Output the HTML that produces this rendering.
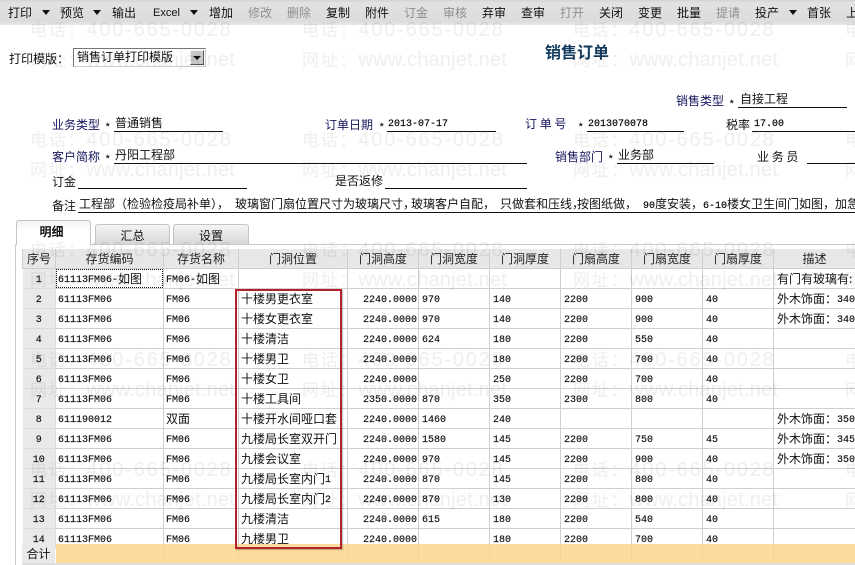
<!DOCTYPE html>
<html lang="zh"><head><meta charset="utf-8"><title>销售订单</title>
<style>
html,body{margin:0;padding:0;background:#fff}
#p{position:relative;width:855px;height:565px;overflow:hidden;background:#fff;font:12px/14px "WenQuanYi Zen Hei","Noto Sans CJK SC",sans-serif;color:#111}
#p div{position:absolute;white-space:nowrap}
#tb{left:0;top:0;width:855px;height:25px;background:linear-gradient(#d4d4d4,#e2e2e2 12%,#dcdcdc 85%,#e8e8e8)}
#tb span{position:absolute;top:6px;font-size:12px;line-height:14px;color:#111}
#tb span.d{color:#8e8e8e}
#tb span.r{width:0;height:0;top:10px;border:4.5px solid transparent;border-top:5px solid #111;border-bottom:0}
.m{font-family:"Liberation Mono",monospace;font-size:10px;color:#000;-webkit-text-stroke:.15px #000}
.l{height:1px;background:#111}
.n{color:#16165e}
.w{font:20px/24px "Liberation Sans","Noto Sans CJK SC",sans-serif;letter-spacing:1.8px;color:rgba(0,0,0,.06);-webkit-text-stroke:.3px rgba(0,0,0,.03);z-index:9}
.w.u{letter-spacing:.2px}
.w em{font-style:normal;font-size:17px;letter-spacing:1.8px}
#tbl{left:22px;top:249px;border-collapse:collapse;table-layout:fixed;width:833px;position:absolute}
#tbl td{border:1px solid #cfcfcf;height:15px;padding:4px 0 0 2px;overflow:hidden;white-space:nowrap;font:10px/15px "Liberation Mono",monospace;color:#111;text-align:left;-webkit-text-stroke:.15px #111}
#tbl th{border:1px solid #cfcfcf;height:19px;overflow:hidden;white-space:nowrap;font:12px/19px "WenQuanYi Zen Hei","Noto Sans CJK SC",sans-serif;background:#e7e7e7;text-align:center;padding:0;border-top:0;color:#222}
#tbl td:first-child{background:#e9e9e9;text-align:center;padding:4px 0 0;border-left:0;border-color:#dcdcdc}
#tbl td:nth-child(n+6){padding-left:3px}
#tbl td.q{text-align:right;padding-right:1px;padding-left:0}
#tbl b{font:12px/10px "WenQuanYi Zen Hei","Noto Sans CJK SC",sans-serif;-webkit-text-stroke:0;position:relative;top:1px}
.tab{border:1px solid #c4c4c4;border-bottom:0;border-radius:3px 3px 0 0;text-align:center;box-sizing:border-box}
</style></head><body><div id="p">
<div id="tb">
<span style="left:8px">打印</span><span class="r" style="left:42px"></span>
<span style="left:60px">预览</span><span class="r" style="left:93px"></span>
<span style="left:112px">输出</span>
<span style="left:153px;font-family:'Liberation Sans',sans-serif;font-size:11px">Excel</span><span class="r" style="left:190px"></span>
<span style="left:209px">增加</span><span class="d" style="left:248px">修改</span><span class="d" style="left:287px">删除</span>
<span style="left:326px">复制</span><span style="left:365px">附件</span><span class="d" style="left:404px">订金</span><span class="d" style="left:443px">审核</span>
<span style="left:482px">弃审</span><span style="left:521px">查审</span><span class="d" style="left:560px">打开</span><span style="left:599px">关闭</span>
<span style="left:638px">变更</span><span style="left:677px">批量</span><span class="d" style="left:716px">提请</span><span style="left:755px">投产</span>
<span class="r" style="left:789px"></span><span style="left:807px">首张</span><span style="left:846px">上</span>
</div>

<div style="left:9px;top:52px">打印模版：</div>
<div style="left:73px;top:48px;width:133px;height:19px;box-sizing:border-box;border:1px solid #777;border-right-color:#ccc;border-bottom-color:#ccc;line-height:16px;padding-left:3px">销售订单打印模版</div>
<div style="left:190px;top:50px;width:14px;height:15px;background:#c9c9c9;border:1px solid;border-color:#eee #555 #555 #eee;box-sizing:border-box"></div>
<div style="left:193px;top:56px;width:0;height:0;border:4px solid transparent;border-top:4px solid #111;border-bottom:0"></div>
<div style="left:545px;top:42px;font-size:16px;line-height:18px;font-weight:bold;color:#123a5c;font-family:'Noto Sans CJK SC',sans-serif">销售订单</div>

<div class="n" style="left:676px;top:94px">销售类型</div><div style="left:729px;top:98px">*</div><div style="left:740px;top:92px">自接工程</div><div class="l" style="left:738px;top:107px;width:109px"></div>

<div class="n" style="left:52px;top:118px">业务类型</div><div style="left:105px;top:121px">*</div><div style="left:115px;top:116px">普通销售</div><div class="l" style="left:114px;top:131px;width:109px"></div>
<div class="n" style="left:325px;top:118px">订单日期</div><div style="left:379px;top:121px">*</div><div class="m" style="left:388px;top:118px">2013-07-17</div><div class="l" style="left:387px;top:131px;width:109px"></div>
<div class="n" style="left:525px;top:117px">订&nbsp;单&nbsp;号</div><div style="left:578px;top:121px">*</div><div class="m" style="left:588px;top:118px">2013070078</div><div class="l" style="left:587px;top:131px;width:97px"></div>
<div style="left:726px;top:118px">税率</div><div class="m" style="left:754px;top:118px">17.00</div><div class="l" style="left:752px;top:131px;width:103px"></div>

<div class="n" style="left:52px;top:150px">客户简称</div><div style="left:105px;top:153px">*</div><div style="left:115px;top:148px">丹阳工程部</div><div class="l" style="left:114px;top:163px;width:413px"></div>
<div class="n" style="left:555px;top:150px">销售部门</div><div style="left:608px;top:153px">*</div><div style="left:618px;top:148px">业务部</div><div class="l" style="left:617px;top:163px;width:97px"></div>
<div style="left:757px;top:150px">业&nbsp;务&nbsp;员</div><div class="l" style="left:807px;top:163px;width:48px"></div>

<div style="left:52px;top:175px">订金</div><div class="l" style="left:78px;top:188px;width:169px"></div>
<div style="left:335px;top:174px">是否返修</div><div class="l" style="left:385px;top:188px;width:142px"></div>

<div style="left:52px;top:199px">备注</div>
<div style="left:79px;top:197px">工程部（检验检疫局补单），</div>
<div style="left:235px;top:197px">玻璃窗门扇位置尺寸为玻璃尺寸，</div>
<div style="left:411px;top:197px">玻璃客户自配，</div>
<div style="left:500px;top:197px">只做套和压线，</div>
<div style="left:577px;top:197px">按图纸做，</div>
<div style="left:643px;top:197px"><span class="m">90</span>度安装，</div>
<div style="left:703px;top:197px"><span class="m">6-10</span>楼女卫生间门如图，</div>
<div style="left:835px;top:197px">加急</div>
<div class="l" style="left:78px;top:212px;width:777px"></div>

<div style="left:15px;top:244px;width:1px;height:321px;background:#ccc"></div>
<div style="left:90px;top:244px;width:765px;height:1px;background:#ccc"></div>
<div class="tab" style="left:16px;top:220px;width:75px;height:25px;font-weight:bold;line-height:21px;padding-right:4px;font-family:'Noto Sans CJK SC',sans-serif;background:linear-gradient(#f2f2f2,#fff 40%)">明细</div>
<div class="tab" style="left:95px;top:224px;width:75px;height:20px;background:linear-gradient(#f4f4f4,#d8d8d8);line-height:22px">汇总</div>
<div class="tab" style="left:173px;top:224px;width:76px;height:20px;background:linear-gradient(#f4f4f4,#d8d8d8);line-height:22px">设置</div>

<table id="tbl"><colgroup><col style="width:33px"><col style="width:108px"><col style="width:75px"><col style="width:109px"><col style="width:71px"><col style="width:71px"><col style="width:71px"><col style="width:71px"><col style="width:71px"><col style="width:71px"><col style="width:82px"></colgroup>
<tr><th>序号</th><th>存货编码</th><th>存货名称</th><th>门洞位置</th><th>门洞高度</th><th>门洞宽度</th><th>门洞厚度</th><th>门扇高度</th><th>门扇宽度</th><th>门扇厚度</th><th>描述</th></tr>
<tr><td>1</td><td>61113FM06-<b>如图</b></td><td>FM06-<b>如图</b></td><td></td><td></td><td></td><td></td><td></td><td></td><td></td><td><b>有门有玻璃有:</b></td></tr>
<tr><td>2</td><td>61113FM06</td><td>FM06</td><td><b>十楼男更衣室</b></td><td class="q">2240.0000</td><td>970</td><td>140</td><td>2200</td><td>900</td><td>40</td><td><b>外木饰面：</b>340</td></tr>
<tr><td>3</td><td>61113FM06</td><td>FM06</td><td><b>十楼女更衣室</b></td><td class="q">2240.0000</td><td>970</td><td>140</td><td>2200</td><td>900</td><td>40</td><td><b>外木饰面：</b>340</td></tr>
<tr><td>4</td><td>61113FM06</td><td>FM06</td><td><b>十楼清洁</b></td><td class="q">2240.0000</td><td>624</td><td>180</td><td>2200</td><td>550</td><td>40</td><td></td></tr>
<tr><td>5</td><td>61113FM06</td><td>FM06</td><td><b>十楼男卫</b></td><td class="q">2240.0000</td><td></td><td>180</td><td>2200</td><td>700</td><td>40</td><td></td></tr>
<tr><td>6</td><td>61113FM06</td><td>FM06</td><td><b>十楼女卫</b></td><td class="q">2240.0000</td><td></td><td>250</td><td>2200</td><td>700</td><td>40</td><td></td></tr>
<tr><td>7</td><td>61113FM06</td><td>FM06</td><td><b>十楼工具间</b></td><td class="q">2350.0000</td><td>870</td><td>350</td><td>2300</td><td>800</td><td>40</td><td></td></tr>
<tr><td>8</td><td>611190012</td><td><b>双面</b></td><td><b>十楼开水间哑口套</b></td><td class="q">2240.0000</td><td>1460</td><td>240</td><td></td><td></td><td></td><td><b>外木饰面：</b>350</td></tr>
<tr><td>9</td><td>61113FM06</td><td>FM06</td><td><b>九楼局长室双开门</b></td><td class="q">2240.0000</td><td>1580</td><td>145</td><td>2200</td><td>750</td><td>45</td><td><b>外木饰面：</b>345</td></tr>
<tr><td>10</td><td>61113FM06</td><td>FM06</td><td><b>九楼会议室</b></td><td class="q">2240.0000</td><td>970</td><td>145</td><td>2200</td><td>900</td><td>40</td><td><b>外木饰面：</b>350</td></tr>
<tr><td>11</td><td>61113FM06</td><td>FM06</td><td><b>九楼局长室内门</b>1</td><td class="q">2240.0000</td><td>870</td><td>145</td><td>2200</td><td>800</td><td>40</td><td></td></tr>
<tr><td>12</td><td>61113FM06</td><td>FM06</td><td><b>九楼局长室内门</b>2</td><td class="q">2240.0000</td><td>870</td><td>130</td><td>2200</td><td>800</td><td>40</td><td></td></tr>
<tr><td>13</td><td>61113FM06</td><td>FM06</td><td><b>九楼清洁</b></td><td class="q">2240.0000</td><td>615</td><td>180</td><td>2200</td><td>540</td><td>40</td><td></td></tr>
<tr><td>14</td><td>61113FM06</td><td>FM06</td><td><b>九楼男卫</b></td><td class="q">2240.0000</td><td></td><td>180</td><td>2200</td><td>700</td><td>40</td><td></td></tr>
</table>

<div style="left:56px;top:269px;width:107px;height:19px;box-sizing:border-box;border:1px dotted #111"></div>

<div style="left:22px;top:544px;width:33px;height:19px;background:#e9e9e9;text-align:center;line-height:20px">合计</div>
<div style="left:56px;top:544px;width:799px;height:19px;background:#fcdc9c"></div>
<div style="left:163px;top:544px;width:1px;height:19px;background:#f3d596"></div>
<div style="left:238px;top:544px;width:1px;height:19px;background:#f3d596"></div>
<div style="left:347px;top:544px;width:1px;height:19px;background:#f3d596"></div>
<div style="left:418px;top:544px;width:1px;height:19px;background:#f3d596"></div>
<div style="left:489px;top:544px;width:1px;height:19px;background:#f3d596"></div>
<div style="left:560px;top:544px;width:1px;height:19px;background:#f3d596"></div>
<div style="left:631px;top:544px;width:1px;height:19px;background:#f3d596"></div>
<div style="left:702px;top:544px;width:1px;height:19px;background:#f3d596"></div>
<div style="left:773px;top:544px;width:1px;height:19px;background:#f3d596"></div>
<div style="left:22px;top:563px;width:833px;height:2px;background:#ddd"></div>

<div style="left:235px;top:289px;width:107px;height:260px;box-sizing:border-box;border:2px solid #b3222a;box-shadow:1px 1px 1px rgba(0,0,0,.25)"></div>

<div class="w" style="left:30px;top:18px"><em>电话：</em>400-665-0028</div><div class="w" style="left:302px;top:18px"><em>电话：</em>400-665-0028</div><div class="w" style="left:573px;top:18px"><em>电话：</em>400-665-0028</div><div class="w" style="left:845px;top:18px"><em>电话</em></div>
<div class="w u" style="left:30px;top:48px"><em>网址：</em>www.chanjet.net</div><div class="w u" style="left:302px;top:48px"><em>网址：</em>www.chanjet.net</div><div class="w u" style="left:573px;top:48px"><em>网址：</em>www.chanjet.net</div><div class="w u" style="left:845px;top:48px"><em>网址</em></div>
<div class="w" style="left:30px;top:128px"><em>电话：</em>400-665-0028</div><div class="w" style="left:302px;top:128px"><em>电话：</em>400-665-0028</div><div class="w" style="left:573px;top:128px"><em>电话：</em>400-665-0028</div><div class="w" style="left:845px;top:128px"><em>电话</em></div>
<div class="w u" style="left:30px;top:158px"><em>网址：</em>www.chanjet.net</div><div class="w u" style="left:302px;top:158px"><em>网址：</em>www.chanjet.net</div><div class="w u" style="left:573px;top:158px"><em>网址：</em>www.chanjet.net</div><div class="w u" style="left:845px;top:158px"><em>网址</em></div>
<div class="w" style="left:30px;top:238px"><em>电话：</em>400-665-0028</div><div class="w" style="left:302px;top:238px"><em>电话：</em>400-665-0028</div><div class="w" style="left:573px;top:238px"><em>电话：</em>400-665-0028</div><div class="w" style="left:845px;top:238px"><em>电话</em></div>
<div class="w u" style="left:30px;top:268px"><em>网址：</em>www.chanjet.net</div><div class="w u" style="left:302px;top:268px"><em>网址：</em>www.chanjet.net</div><div class="w u" style="left:573px;top:268px"><em>网址：</em>www.chanjet.net</div><div class="w u" style="left:845px;top:268px"><em>网址</em></div>
<div class="w" style="left:30px;top:348px"><em>电话：</em>400-665-0028</div><div class="w" style="left:302px;top:348px"><em>电话：</em>400-665-0028</div><div class="w" style="left:573px;top:348px"><em>电话：</em>400-665-0028</div><div class="w" style="left:845px;top:348px"><em>电话</em></div>
<div class="w u" style="left:30px;top:378px"><em>网址：</em>www.chanjet.net</div><div class="w u" style="left:302px;top:378px"><em>网址：</em>www.chanjet.net</div><div class="w u" style="left:573px;top:378px"><em>网址：</em>www.chanjet.net</div><div class="w u" style="left:845px;top:378px"><em>网址</em></div>
<div class="w" style="left:30px;top:458px"><em>电话：</em>400-665-0028</div><div class="w" style="left:302px;top:458px"><em>电话：</em>400-665-0028</div><div class="w" style="left:573px;top:458px"><em>电话：</em>400-665-0028</div><div class="w" style="left:845px;top:458px"><em>电话</em></div>
<div class="w u" style="left:30px;top:488px"><em>网址：</em>www.chanjet.net</div><div class="w u" style="left:302px;top:488px"><em>网址：</em>www.chanjet.net</div><div class="w u" style="left:573px;top:488px"><em>网址：</em>www.chanjet.net</div><div class="w u" style="left:845px;top:488px"><em>网址</em></div>
</div></body></html>
